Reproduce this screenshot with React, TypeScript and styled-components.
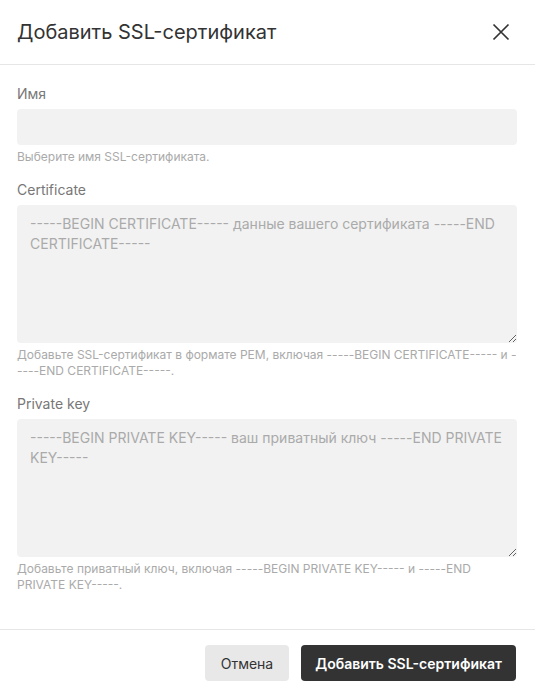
import React from "react";
import styled, { createGlobalStyle } from "styled-components";

const Global = createGlobalStyle`
  html, body { margin: 0; padding: 0; background: #ffffff; }
  body { font-family: Inter, "Noto Sans", sans-serif; -webkit-font-smoothing: antialiased; }
  * { box-sizing: border-box; }
`;

const Dialog = styled.div`
  width: 535px;
  height: 694px;
  background: #fff;
  display: flex;
  flex-direction: column;
`;

const Header = styled.header`
  height: 65px;
  flex: none;
  display: flex;
  align-items: center;
  justify-content: space-between;
  padding: 0 18px 1px 17px;
  border-bottom: 1px solid #e6e6e6;
`;

const Title = styled.h2`
  margin: 0;
  font-size: 20px;
  font-weight: 400;
  color: #333;
`;

const CloseButton = styled.button`
  width: 32px;
  height: 32px;
  border: 0;
  background: transparent;
  padding: 0;
  display: flex;
  align-items: center;
  justify-content: center;
  color: #333;
  cursor: pointer;
`;

const Body = styled.div`
  flex: 1;
  padding: 19px 18px 0 17px;
  display: flex;
  flex-direction: column;
  gap: 15px;
`;

const Field = styled.div`
  display: flex;
  flex-direction: column;
`;

const Label = styled.label`
  font-size: 14px;
  line-height: 20px;
  color: #777;
  margin-bottom: 5px;
`;

const Input = styled.input`
  height: 36px;
  border: 0;
  border-radius: 4px;
  background: #f2f2f2;
  padding: 0 13px;
  font: inherit;
  font-size: 14px;
  outline: none;
`;

const TextArea = styled.textarea`
  height: 138px;
  border: 0;
  border-radius: 4px;
  background: #f2f2f2;
  padding: 9px 13px;
  font-family: inherit;
  font-size: 14px;
  line-height: 20px;
  color: #333;
  outline: none;
  resize: vertical;
  &::placeholder {
    color: #aaa;
  }
`;

const Hint = styled.div`
  margin-top: 4px;
  font-size: 12px;
  line-height: 16px;
  color: #aaa;
`;

const Footer = styled.footer`
  height: 65px;
  flex: none;
  border-top: 1px solid #e6e6e6;
  display: flex;
  align-items: flex-start;
  justify-content: flex-end;
  gap: 12px;
  padding: 15px 19px 0 17px;
`;

const Button = styled.button<{ $primary?: boolean }>`
  height: 36px;
  border: 0;
  border-radius: 4px;
  padding: 0 ${(p) => (p.$primary ? "14px" : "16px")};
  font-family: inherit;
  font-size: 14px;
  font-weight: ${(p) => (p.$primary ? 600 : 400)};
  background: ${(p) => (p.$primary ? "#333333" : "#e8e8e8")};
  color: ${(p) => (p.$primary ? "#ffffff" : "#333333")};
  cursor: pointer;
`;

export default function App() {
  return (
    <>
      <Global />
      <Dialog>
        <Header>
          <Title>Добавить SSL-сертификат</Title>
          <CloseButton aria-label="Закрыть">
            <svg width="18" height="18" viewBox="0 0 18 18" fill="none">
              <path d="M1.5 1.5L16.5 16.5M16.5 1.5L1.5 16.5" stroke="#333" strokeWidth="1.7" />
            </svg>
          </CloseButton>
        </Header>
        <Body>
          <Field>
            <Label>Имя</Label>
            <Input />
            <Hint>Выберите имя SSL-сертификата.</Hint>
          </Field>
          <Field>
            <Label>Certificate</Label>
            <TextArea placeholder="-----BEGIN CERTIFICATE----- данные вашего сертификата -----END CERTIFICATE-----" />
            <Hint>
              Добавьте SSL-сертификат в формате PEM, включая -----BEGIN CERTIFICATE----- и -----END CERTIFICATE-----.
            </Hint>
          </Field>
          <Field>
            <Label>Private key</Label>
            <TextArea placeholder="-----BEGIN PRIVATE KEY----- ваш приватный ключ -----END PRIVATE KEY-----" />
            <Hint>
              Добавьте приватный ключ, включая -----BEGIN PRIVATE KEY----- и -----END PRIVATE KEY-----.
            </Hint>
          </Field>
        </Body>
        <Footer>
          <Button>Отмена</Button>
          <Button $primary>Добавить SSL-сертификат</Button>
        </Footer>
      </Dialog>
    </>
  );
}
